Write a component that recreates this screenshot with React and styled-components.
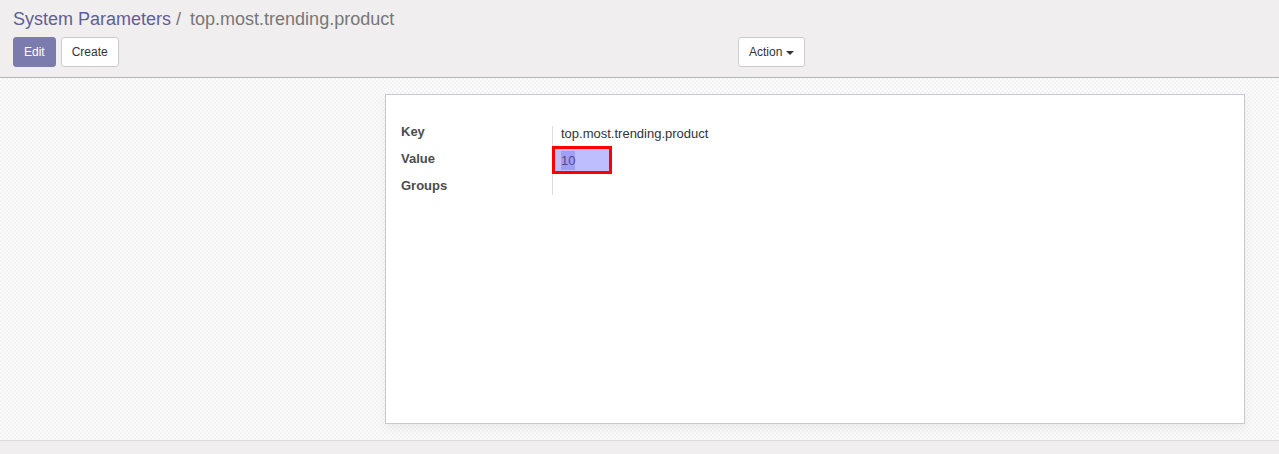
import React from 'react';
import styled, { createGlobalStyle } from 'styled-components';

const GlobalStyle = createGlobalStyle`
    html, body {
        margin: 0;
        padding: 0;
        height: 100%;
    }
    body {
        font-family: "Liberation Sans", Arial, sans-serif;
        font-size: 13px;
        color: #4c4c4c;
        background-color: #f0eeee;
    }
    #root {
        height: 100%;
    }
`;

const StyledPage = styled.div`
    height: 454px;
    display: flex;
    flex-direction: column;
    overflow: hidden;
`;

const ControlPanel = styled.div`
    height: 78px;
    flex: 0 0 auto;
    padding: 6px 13px 0 13px;
    box-sizing: border-box;
    background-color: #f0eeee;
    border-bottom: 1px solid #b5b5b5;
    display: flex;
    flex-direction: column;

    .breadcrumb {
        font-size: 18px;
        line-height: 26px;
        height: 26px;
        white-space: nowrap;

        .parent {
            color: #5f5e97;
        }

        .sep {
            color: #777777;
            margin: 0 9px 0 5px;
        }

        .current {
            color: #777777;
        }
    }

    .buttons {
        margin-top: 5px;
        display: flex;
        align-items: center;
    }

    .left {
        width: 725px;
        display: flex;
        gap: 5px;
    }
`;

const Button = styled.button`
    height: 30px;
    box-sizing: border-box;
    padding: 0 10px;
    font-family: "Liberation Sans", Arial, sans-serif;
    font-size: 12px;
    border-radius: 3px;
    cursor: pointer;
    display: flex;
    align-items: center;
    gap: 4px;
    border: 1px solid ${props => props.primary ? '#7c7bad' : '#cccccc'};
    background-color: ${props => props.primary ? '#7c7bad' : '#ffffff'};
    color: ${props => props.primary ? '#ffffff' : '#333333'};

    .caret {
        width: 0;
        height: 0;
        border-left: 4px solid transparent;
        border-right: 4px solid transparent;
        border-top: 4px solid #333333;
        margin-top: 1px;
    }
`;

const Content = styled.div`
    flex: 1 1 auto;
    background-color: #fafafa;
    background-image: repeating-conic-gradient(#f3f3f3 0 25%, #fbfbfb 0 50%);
    background-size: 4px 4px;
    padding: 16px 34px 16px 385px;
    box-sizing: border-box;
    display: flex;
    flex-direction: column;
`;

const Sheet = styled.div`
    height: 330px;
    box-sizing: border-box;
    background-color: #ffffff;
    border: 1px solid #c8c8d3;
    box-shadow: 0 4px 10px rgba(0, 0, 0, 0.06);
    padding: 27px 15px 0 15px;
`;

const FieldTable = styled.div`
    display: grid;
    grid-template-columns: 151px 1fr;
    grid-auto-rows: 27px;
    width: 100%;

    .label {
        font-weight: bold;
        color: #4c4c4c;
        display: flex;
        align-items: flex-start;
        padding-top: 2px;
    }

    .value {
        border-left: 1px solid #dddddd;
        padding-left: 8px;
        display: flex;
        align-items: flex-start;
        padding-top: 2px;
        color: #333333;
    }

    .value.first {
        margin-top: 4px;
        padding-top: 0;
    }

    .value.last {
        margin-bottom: 8px;
    }
`;

const Highlight = styled.div`
    margin: -5px 0 0 -9px;
    width: 60px;
    height: 28px;
    box-sizing: border-box;
    border: 3px solid #ff0000;
    background-color: #bebeff;
    padding: 2px 0 0 6px;

    span {
        background-color: #9f9ff5;
        color: #4b4b8a;
        line-height: 19px;
        display: inline-block;
    }
`;

const Footer = styled.div`
    height: 14px;
    flex: 0 0 auto;
    box-sizing: border-box;
    background-color: #f0eeee;
    border-top: 1px solid #dcdcdc;
`;

const App = () => {
    return (
        <StyledPage>
            <GlobalStyle />
            <ControlPanel>
                <div className='breadcrumb'>
                    <span className='parent'>System Parameters</span>
                    <span className='sep'>/</span>
                    <span className='current'>top.most.trending.product</span>
                </div>
                <div className='buttons'>
                    <div className='left'>
                        <Button primary>Edit</Button>
                        <Button>Create</Button>
                    </div>
                    <Button>Action <span className='caret'></span></Button>
                </div>
            </ControlPanel>
            <Content>
                <Sheet>
                    <FieldTable>
                        <div className='label'>Key</div>
                        <div className='value first'>top.most.trending.product</div>
                        <div className='label'>Value</div>
                        <div className='value'>
                            <Highlight><span>10</span></Highlight>
                        </div>
                        <div className='label'>Groups</div>
                        <div className='value last'></div>
                    </FieldTable>
                </Sheet>
            </Content>
            <Footer />
        </StyledPage>
    );
}

export default App;
